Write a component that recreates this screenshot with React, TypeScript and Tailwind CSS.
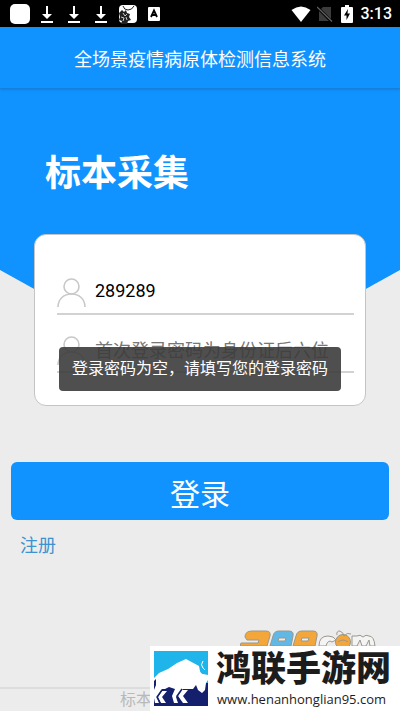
import { useState } from "react";

const SANS = "font-[Roboto,'Noto_Sans_CJK_SC',sans-serif]";

function DownloadIcon() {
  return (
    <svg viewBox="0 0 14 20" className="h-5 w-3.5" fill="#fff">
      <path d="M6 2h2v8h4l-5 5-5-5h4z" />
      <path d="M1 17h12v2H1z" />
    </svg>
  );
}

function UserIcon() {
  return (
    <svg viewBox="0 0 30 30" className="h-[30px] w-[30px] shrink-0" fill="none" stroke="#c8c8c8" strokeWidth="1.6">
      <circle cx="14.5" cy="8.5" r="7.5" />
      <path d="M1 29C1 21 7 16 14.500 16S28 21 28 29" />
    </svg>
  );
}

function StatusBar() {
  return (
    <div className="flex h-[27px] items-center justify-between bg-black pr-2 pl-2.5 text-white">
      <div className="flex items-center">
        <span className="h-5 w-5 rounded-[5px] bg-white" />
        <div className="ml-2.5 flex gap-[13px]">
          <DownloadIcon />
          <DownloadIcon />
          <DownloadIcon />
        </div>
        {/* beetle app */}
        <svg viewBox="0 0 20 20" className="ml-2.5 h-5 w-5">
          <rect x="1" y="1" width="18" height="18" rx="4" fill="#fff" />
          <path d="M5 2q1 4 5 4t6-4" fill="none" stroke="#222" strokeWidth="1" />
          <path d="M1 9l3-3 2 2 2-2 1 3 3 1-1 3 2 3-3 1-1 3H3l1-3-3-1 1-3z" fill="#222" />
          <path d="M5 9l2 3 2-2M3 13l3 1-1 3M8 13l1 3" fill="none" stroke="#ddd" strokeWidth="0.9" />
        </svg>
        <svg viewBox="0 0 12 14" className="ml-2.5 h-3.5 w-3">
          <rect width="12" height="14" rx="1" fill="#fff" />
          <path d="M3 10L6 3.500 9 10M4 8h4" fill="none" stroke="#000" strokeWidth="1.800" />
        </svg>
      </div>
      <div className="flex items-center">
        <svg viewBox="0 0 20 16" className="h-4 w-5" fill="#fff">
          <path d="M10 16L.5 4Q10-3 19.500 4z" />
        </svg>
        <svg viewBox="0 0 16 16" className="ml-1.5 h-4 w-4">
          <path d="M6 1h8v14H2V5z" fill="#3c3c3c" />
          <path d="M0 1l15 15" stroke="#000" strokeWidth="3" />
          <path d="M0 1l15 14.500" stroke="#666" strokeWidth="1.200" />
        </svg>
        <svg viewBox="0 0 12 18" className="ml-2 h-[18px] w-3">
          <path d="M4 0h4v2h3q1 0 1 1v14q0 1-1 1H1q-1 0-1-1V3q0-1 1-1h3z" fill="#fff" />
          <path d="M7 4L3 10.500h2.500V15L9 8.500H6.500z" fill="#000" />
        </svg>
        <span className="ml-2 text-base font-medium">3:13</span>
      </div>
    </div>
  );
}

function BisonLogo() {
  return (
    <svg viewBox="0 0 54 55" className="h-[55px] w-[54px] shrink-0">
      <path d="M0 0h54v55H0z" fill="#1fb4ea" />
      <path d="M0 32h54v23H0z" fill="#14206e" />
      <path
        d="M0 27L5 22 14 18 23 12 32 8 45 15 46 20 49 23 54 24V29L52 32 51 39 48 42 44 39 42 34 39 38H29L22 46 24 52H20L18 45 21 38 15 36 11 38H8L3 46 5 52H1L0 47z"
        fill="#fff"
      />
      <path d="M2 28v6l-2 5v-9z" fill="#14206e" />
      <path d="M8 40h5l-5 6 4 6H7l-3-6zM28 39h6l-5 6 5 7h-5l-5-7z" fill="#fff" />
      <path d="M8 39L3 46l3 6M28 38l-5 7 4 7" fill="none" stroke="#14206e" strokeWidth="1.500" />
      <path d="M49 10q-3 4 0 7l2 3-2 3q-3-1-3-4z" fill="#1fb4ea" />
      <path d="M49 10q-3 4 0 7l2 2" fill="none" stroke="#fff" strokeWidth="1" />
    </svg>
  );
}

function SiteBanner() {
  return (
    <div className="absolute right-0 bottom-0 w-[250px]">
      {/* tops of the badge letters behind the banner */}
      <svg viewBox="0 0 140 16" className="ml-[90px] block h-4 w-[140px]" stroke="#9a978c" strokeWidth="1">
        <path d="M5 7q0-6 7-6h14q5 0 4 5l-3 10H0l1-3h17l1-3H7z" fill="#f3a73b" />
        <path d="M30 16l3-10q1-5 6-5h10q5 0 4 5l-2 10zM39 8h7l-1 3h-7z" fill="#61b8e4" fillRule="evenodd" />
        <path d="M53 16l3-10q1-5 6-5h11q5 0 4 5l-2 10zM62 8h7l-1 3h-7z" fill="#f3a73b" fillRule="evenodd" />
        <path d="M79 16q0-10 9-10 6 0 8 4l-4 2q-4-3-6 4z" fill="#f4f4f4" />
        <circle cx="103" cy="12" r="7.500" fill="#f3a73b" />
        <path d="M97 5q-1-4 3-4 4 2 4 5 3-4 7-2M98 12q5-4 10 0" fill="none" />
        <path d="M112 16V6h5q3-2 6 1 3-3 6-1 5 0 6 10h-5l-1-6-3 6h-4l-2-6-3 6z" fill="#f4f4f4" />
      </svg>
      <div className="flex h-[65px] gap-2 bg-white pt-[5px] pl-1">
        <BisonLogo />
        <div className="flex flex-col">
          <span className="text-[35px] leading-[38px] font-black whitespace-nowrap text-[#1c1c1c]">鸿联手游网</span>
          <span className="pl-px font-['Open_Sans',sans-serif] text-[13px] leading-5 font-medium text-[#1c1c1c]">
            www.henanhonglian95.com
          </span>
        </div>
      </div>
    </div>
  );
}

export default function App() {
  const [account, setAccount] = useState("289289");
  const [password, setPassword] = useState("");

  return (
    <div className={`relative flex min-h-screen flex-col bg-[#ececec] ${SANS}`}>
      <StatusBar />
      <header className="relative z-10 flex h-[62px] items-center justify-center border-b border-[#1280dc] bg-[#1193ff] pt-1 shadow-sm">
        <h1 className="text-lg text-white">全场景疫情病原体检测信息系统</h1>
      </header>

      <main className="relative">
        {/* blue backdrop, pointed at the bottom */}
        <div className="absolute inset-x-0 top-0 h-[292px] bg-[#1193ff] [clip-path:polygon(0_0,100%_0,100%_62%,50%_100%,0_62%)]" />

        <div className="relative">
          <h2 className="px-[45px] pt-[58px] text-4xl leading-[54px] font-bold text-white">标本采集</h2>

          <form id="login" className="relative mx-[34px] mt-[33px] h-[172px] rounded-xl border border-[#c4c4c4] bg-white pt-[38px] pr-[11px] pl-[22px]">
            <label className="flex h-[42px] items-center gap-2 border-b-2 border-[#d2d2d2]">
              <UserIcon />
              <input
                aria-label="账号"
                value={account}
                onChange={(e) => setAccount(e.target.value)}
                className="min-w-0 flex-1 pb-1 text-lg text-black outline-none"
              />
            </label>
            <label className="mt-4 flex h-[42px] items-center gap-2 border-b-2 border-[#d2d2d2]">
              <UserIcon />
              <input
                type="password"
                aria-label="密码"
                value={password}
                onChange={(e) => setPassword(e.target.value)}
                placeholder="首次登录密码为身份证后六位"
                className="min-w-0 flex-1 text-lg outline-none placeholder:text-[#777]"
              />
            </label>

            {/* toast */}
            <div role="status" className="absolute inset-x-6 bottom-3.5 flex h-11 items-center justify-center rounded bg-[#3c3c3c]/90 text-base whitespace-nowrap text-white">
              登录密码为空，请填写您的登录密码
            </div>
          </form>

          <div className="px-[11px] pt-14">
            <button type="submit" form="login" className="flex h-[58px] w-full items-center justify-center rounded-md bg-[#1193ff] pt-2 text-3xl text-white">
              登录
            </button>
            <a href="#register" className="mt-3 ml-[9px] inline-block text-lg text-[#3d92d0]">
              注册
            </a>
          </div>
        </div>
      </main>

      <footer className="mt-auto border-t-2 border-[#dcdcdc] pl-[120px] text-base leading-[22px] text-[#b8b8b8]">标本</footer>
      <SiteBanner />
    </div>
  );
}
